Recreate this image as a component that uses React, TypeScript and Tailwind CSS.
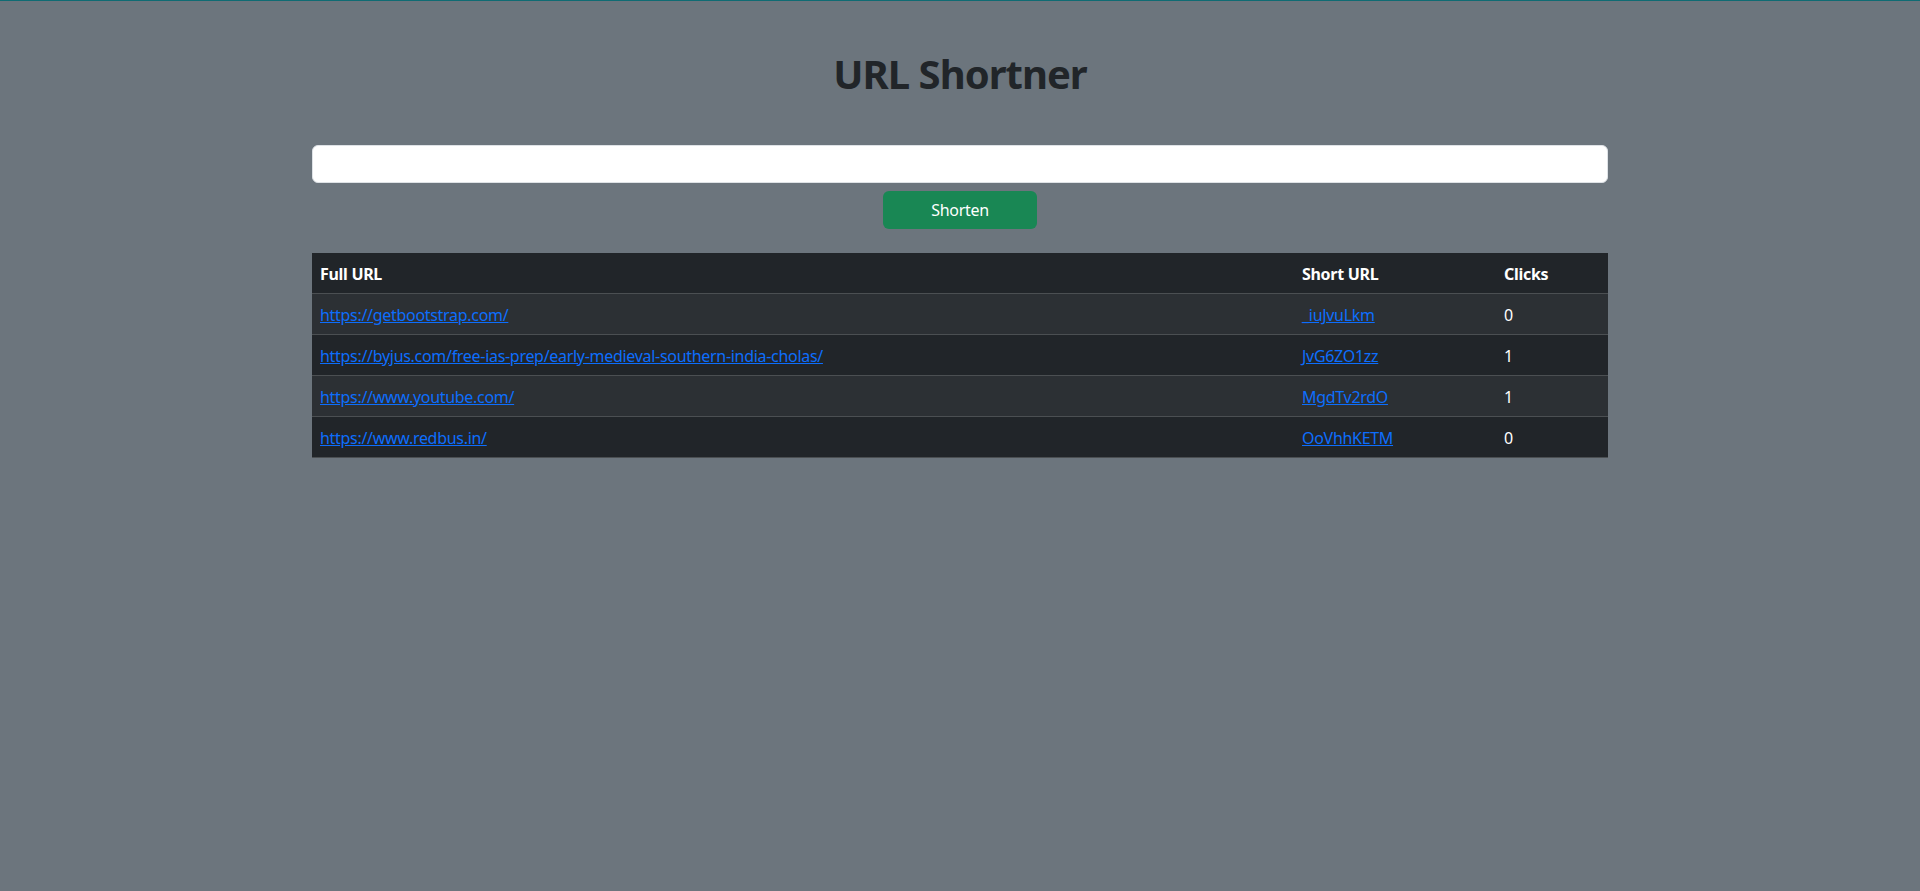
import React from "react";

const rows = [
  { full: "https://getbootstrap.com/", short: "_iuJvuLkm", clicks: 0 },
  { full: "https://byjus.com/free-ias-prep/early-medieval-southern-india-cholas/", short: "JvG6ZO1zz", clicks: 1 },
  { full: "https://www.youtube.com/", short: "MgdTv2rdO", clicks: 1 },
  { full: "https://www.redbus.in/", short: "OoVhhKETM", clicks: 0 },
];

export default function App() {
  return (
    <div
      className="min-h-[891px] bg-[#6c757d] border-t border-[#0f6b73] text-[16px] leading-[24px] text-[#212529] tracking-[-0.3px]"
      style={{ fontFamily: '"Segoe UI", "Noto Sans", "Open Sans", sans-serif' }}
    >
      <div className="w-[1296px] mx-auto pt-[49px]">
        <h1 className="text-center text-[40px] leading-[48px] font-bold text-[#212529] tracking-[-1px]">URL Shortner</h1>
        <form className="mt-[47px] flex flex-col items-center" onSubmit={(e) => e.preventDefault()}>
          <input
            type="url"
            className="w-full h-[38px] bg-white border border-[#dee2e6] rounded-[6px] px-3 outline-none"
          />
          <button
            type="submit"
            className="mt-2 w-[154px] h-[38px] bg-[#198754] text-white rounded-[6px] text-[16px] leading-[24px]"
          >
            Shorten
          </button>
        </form>
        <table className="mt-[24px] w-full border-collapse text-white">
          <thead>
            <tr className="bg-[#212529] border-b border-[#4b4f52]">
              <th className="w-[982px] text-left font-bold px-2 pt-[9px] pb-[7px]">Full URL</th>
              <th className="w-[202px] text-left font-bold px-2 pt-[9px] pb-[7px]">Short URL</th>
              <th className="text-left font-bold px-2 pt-[9px] pb-[7px]">Clicks</th>
            </tr>
          </thead>
          <tbody>
            {rows.map((r, i) => (
              <tr
                key={r.short}
                className={(i % 2 === 0 ? "bg-[#2c3034]" : "bg-[#212529]") + " border-b border-[#4b4f52]"}
              >
                <td className="px-2 pt-[9px] pb-[7px]">
                  <a href="#" className="text-[#0d6efd] underline">{r.full}</a>
                </td>
                <td className="px-2 pt-[9px] pb-[7px]">
                  <a href="#" className="text-[#0d6efd] underline">{r.short}</a>
                </td>
                <td className="px-2 pt-[9px] pb-[7px]">{r.clicks}</td>
              </tr>
            ))}
          </tbody>
        </table>
      </div>
    </div>
  );
}
